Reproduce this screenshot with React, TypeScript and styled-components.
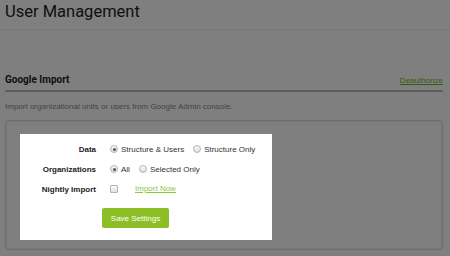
import React from 'react'
import styled, { createGlobalStyle } from 'styled-components'

const GlobalStyle = createGlobalStyle`
  html, body {
    margin: 0;
    padding: 0;
    background: #ffffff;
    font-family: 'Liberation Sans', Arial, sans-serif;
    font-size: 8px;
    color: #333;
  }
`

const Page = styled.div`
  position: relative;
  width: 450px;
  height: 256px;
  overflow: hidden;
`

const Header = styled.div`
  height: 30px;
  border-bottom: 1px solid #ececec;
  padding: 0 5px;
  box-sizing: border-box;
`

const Title = styled.h1`
  margin: 0;
  padding-top: 1px;
  font-family: Roboto, 'Liberation Sans', sans-serif;
  font-weight: 400;
  font-size: 16.5px;
  line-height: 22px;
  color: #222;
`

const Content = styled.div`
  padding: 0 7px 0 5px;
`

const SectionHead = styled.div`
  display: flex;
  align-items: flex-end;
  justify-content: space-between;
  margin-top: 43px;
  padding-bottom: 4px;
  border-bottom: 2px solid #bdbdbd;
`

const SectionTitle = styled.h2`
  margin: 0;
  font-family: Roboto, 'Liberation Sans', sans-serif;
  font-weight: 700;
  font-size: 10px;
  line-height: 13px;
  color: #222;
`

const Link = styled.a<{ $light?: boolean }>`
  color: ${(p) => (p.$light ? '#8cc63f' : '#79b51c')};
  text-decoration: underline;
  font-size: 8px;
  line-height: 10px;
  cursor: pointer;
`

const Description = styled.p`
  margin: 10px 0 0;
  font-size: 8px;
  line-height: 10px;
  color: #8a8a8a;
`

const Box = styled.div`
  margin-top: 8px;
  height: 130px;
  border: 1px solid #dcdcdc;
  border-radius: 3px;
  box-shadow: inset 0 0 0 1px #f0f0f0;
  padding: 13px 0 0 14px;
  box-sizing: border-box;
`

const Spotlight = styled.div`
  position: relative;
  z-index: 2;
  width: 252px;
  height: 106px;
  background: #ffffff;
  box-sizing: border-box;
  padding-top: 5px;
`

const Overlay = styled.div`
  position: absolute;
  inset: 0;
  z-index: 1;
  background: rgba(0, 0, 0, 0.5);
`

const FormGrid = styled.div`
  display: grid;
  grid-template-columns: 76px 1fr;
  column-gap: 14px;
  grid-auto-rows: 20px;
  align-items: center;
`

const FieldLabel = styled.div`
  text-align: right;
  font-weight: 700;
  font-size: 8px;
  color: #222;
`

const Options = styled.div`
  display: flex;
  align-items: center;
  gap: 9px;
`

const Option = styled.label`
  display: inline-flex;
  align-items: center;
  gap: 3px;
  font-size: 8px;
  color: #333;
`

const RadioDot = styled.span<{ $checked?: boolean }>`
  position: relative;
  width: 6px;
  height: 6px;
  border-radius: 50%;
  border: 1px solid #b5b5b5;
  background: linear-gradient(#fafafa, #dedede);
  &::after {
    content: '';
    display: ${(p) => (p.$checked ? 'block' : 'none')};
    position: absolute;
    left: 1.5px;
    top: 1.5px;
    width: 3px;
    height: 3px;
    border-radius: 50%;
    background: #555;
  }
`

const CheckBox = styled.span`
  width: 6px;
  height: 6px;
  border: 1px solid #b5b5b5;
  border-radius: 1px;
  background: linear-gradient(#fafafa, #e2e2e2);
  margin-right: 8px;
`

const Footer = styled.div`
  padding: 9px 0 0 82px;
`

const SaveButton = styled.button`
  width: 67px;
  height: 20px;
  border: none;
  border-radius: 2px;
  background: #8cbf26;
  color: #ffffff;
  font-family: 'Liberation Sans', Arial, sans-serif;
  font-size: 8px;
  padding: 0;
`

function Radio({ label, checked }: { label: string; checked?: boolean }) {
  return (
    <Option>
      <RadioDot $checked={checked} />
      {label}
    </Option>
  )
}

export default function App() {
  return (
    <Page>
      <GlobalStyle />
      <Header>
        <Title>User Management</Title>
      </Header>
      <Content>
        <SectionHead>
          <SectionTitle>Google Import</SectionTitle>
          <Link>Deauthorize</Link>
        </SectionHead>
        <Description>Import organizational units or users from Google Admin console.</Description>
        <Box>
          <Spotlight>
            <FormGrid>
              <FieldLabel>Data</FieldLabel>
              <Options>
                <Radio label="Structure & Users" checked />
                <Radio label="Structure Only" />
              </Options>
              <FieldLabel>Organizations</FieldLabel>
              <Options>
                <Radio label="All" checked />
                <Radio label="Selected Only" />
              </Options>
              <FieldLabel>Nightly Import</FieldLabel>
              <Options>
                <CheckBox />
                <Link $light>Import Now</Link>
              </Options>
            </FormGrid>
            <Footer>
              <SaveButton>Save Settings</SaveButton>
            </Footer>
          </Spotlight>
        </Box>
      </Content>
      <Overlay />
    </Page>
  )
}
